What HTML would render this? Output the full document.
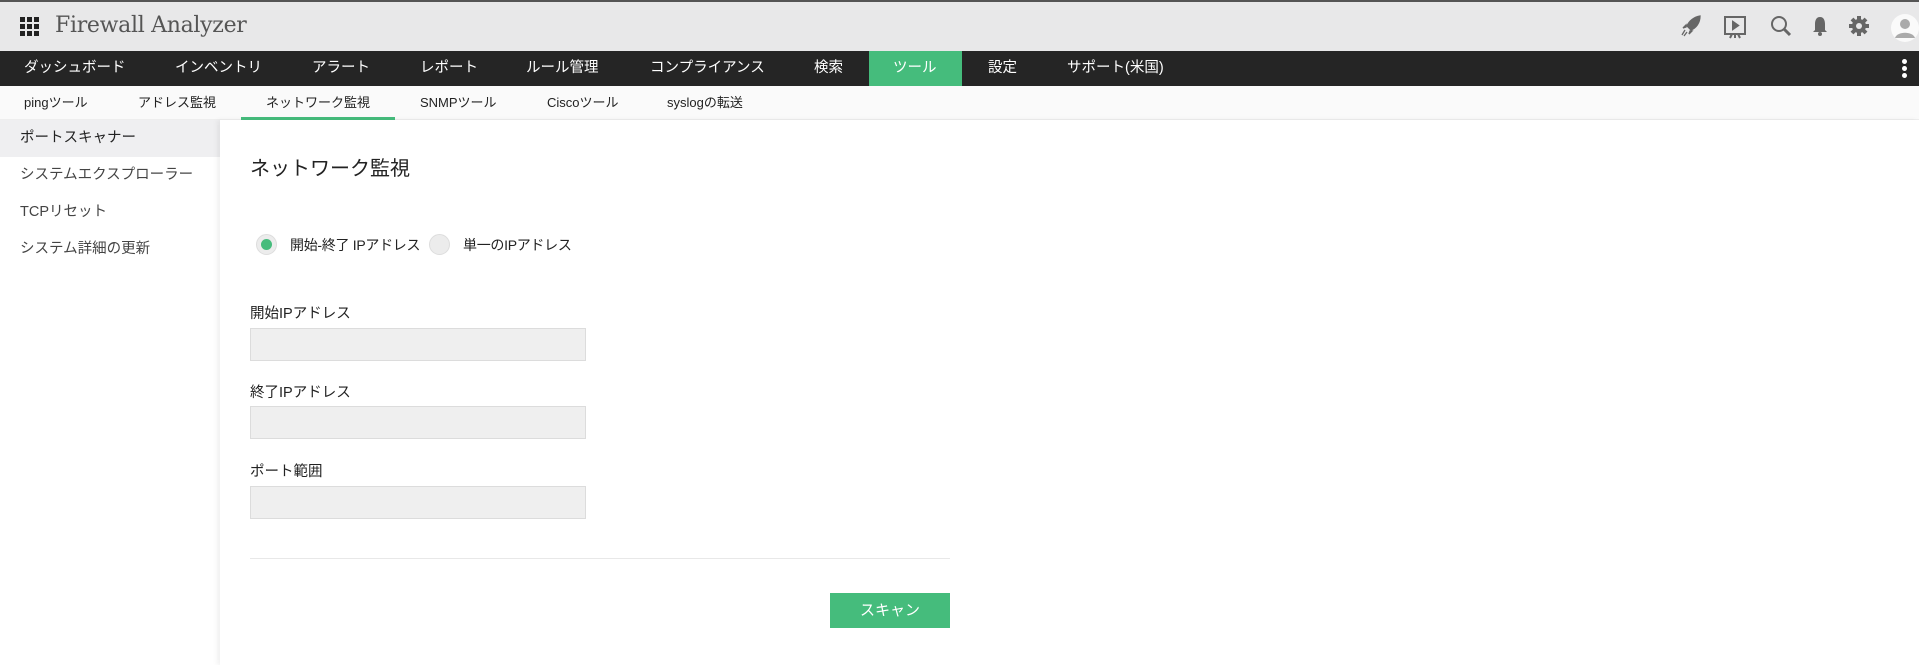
<!DOCTYPE html>
<html><head><meta charset="utf-8"><style>
*{margin:0;padding:0;box-sizing:border-box}
body{width:1919px;height:665px;overflow:hidden;background:#fff;font-family:"Liberation Sans","Noto Sans CJK JP",sans-serif;color:#222;position:relative}
.top{position:absolute;left:0;top:0;width:1919px;height:51px;background:#e8e8e9;border-top:2px solid #555}
.title{position:absolute;left:55px;top:11px;font-family:"DejaVu Serif","Liberation Serif",serif;font-size:22px;color:#555;font-weight:300;letter-spacing:-0.3px}
.nav{position:absolute;left:0;top:51px;width:1919px;height:35px;background:#252525}
.nav span{position:absolute;top:0;line-height:35px;color:#fff;font-size:14.5px}
.sub{position:absolute;left:0;top:86px;width:1919px;height:34px;background:#fafafa;border-bottom:1px solid #eee}
.sub span{position:absolute;top:0;line-height:33px;font-size:13px;color:#222}
.side{position:absolute;left:0;top:120px;width:220px;height:545px;background:#fff}
.side div{height:37px;line-height:37px;padding-left:20px;font-size:14.5px;color:#444}
.main{position:absolute;left:220px;top:120px;width:1699px;height:545px;background:#fff;box-shadow:-3px 0 5px rgba(0,0,0,.06)}
.abs{position:absolute}
.lbl{position:absolute;left:250px;font-size:14.5px;color:#222}
.inp{position:absolute;left:250px;width:336px;height:33px;background:#efefef;border:1px solid #dcdcdc}
</style></head><body>
<div class="top">
<svg class="abs" style="left:20px;top:15px" width="20" height="20" viewBox="0 0 20 20" fill="#222">
<rect x="0" y="0" width="5" height="5"/><rect x="7" y="0" width="5" height="5"/><rect x="14" y="0" width="5" height="5"/>
<rect x="0" y="7" width="5" height="5"/><rect x="7" y="7" width="5" height="5"/><rect x="14" y="7" width="5" height="5"/>
<rect x="0" y="14" width="5" height="5"/><rect x="7" y="14" width="5" height="5"/><rect x="14" y="14" width="5" height="5"/></svg>
<div class="title">Firewall Analyzer</div>
<svg class="abs" style="left:1680px;top:13px" width="22" height="22" viewBox="0 0 22 22" fill="#666"><path d="M20 1 C14 2 9 6 7 11 L11 15 C16 13 20 8 20 1Z M6 12 L3 13 L6 10Z M10 16 L9 19 L12 16Z M5 15 L2 20 M7 17 L4 21" stroke="#666" stroke-width="1.3"/></svg>
<svg class="abs" style="left:1722px;top:12px" width="26" height="26" viewBox="0 0 26 26" fill="none" stroke="#666" stroke-width="2"><rect x="3" y="3" width="20" height="17"/><path d="M11 8 L16 11.5 L11 15Z" fill="#666"/><path d="M13 20 V24 M8 24 L10 20 M18 24 L16 20"/></svg>
<svg class="abs" style="left:1770px;top:13px" width="22" height="22" viewBox="0 0 22 22" fill="none" stroke="#666" stroke-width="2"><circle cx="9" cy="9" r="7"/><path d="M14 14 L20 20" stroke-width="3"/></svg>
<svg class="abs" style="left:1810px;top:13px" width="20" height="22" viewBox="0 0 20 22" fill="#666"><path d="M10 2 C6 2 5 6 5 9 V15 L3 17 H17 L15 15 V9 C15 6 14 2 10 2Z"/><circle cx="10" cy="19" r="2"/></svg>
<svg class="abs" style="left:1848px;top:13px" width="22" height="22" viewBox="0 0 22 22" fill="#666"><circle cx="11" cy="11" r="7"/><g stroke="#666" stroke-width="4"><path d="M11 1V21M1 11H21M4 4L18 18M18 4L4 18"/></g><circle cx="11" cy="11" r="3" fill="#e8e8e9"/></svg>
<svg class="abs" style="left:1890px;top:11px" width="29" height="30" viewBox="0 0 29 30"><circle cx="15" cy="15" r="14" fill="#fafafa"/><circle cx="15" cy="11" r="5" fill="#aaa"/><path d="M5 25 C7 18 23 18 25 25 Z" fill="#aaa"/></svg>
</div>
<div class="nav">
<span style="left:24px">ダッシュボード</span><span style="left:175px">インベントリ</span><span style="left:312px">アラート</span><span style="left:420px">レポート</span><span style="left:526px">ルール管理</span><span style="left:650px">コンプライアンス</span><span style="left:814px">検索</span>
<div class="abs" style="left:869px;top:0;width:93px;height:35px;background:#45bc7c"></div><span style="left:893px">ツール</span>
<span style="left:988px">設定</span><span style="left:1067px">サポート(米国)</span>
<div class="abs" style="left:1902px;top:8px;width:5px;height:5px;border-radius:50%;background:#fff"></div>
<div class="abs" style="left:1902px;top:15px;width:5px;height:5px;border-radius:50%;background:#fff"></div>
<div class="abs" style="left:1902px;top:22px;width:5px;height:5px;border-radius:50%;background:#fff"></div>
</div>
<div class="sub">
<span style="left:24px">pingツール</span><span style="left:138px">アドレス監視</span><span style="left:266px">ネットワーク監視</span><span style="left:420px">SNMPツール</span><span style="left:547px">Ciscoツール</span><span style="left:667px">syslogの転送</span>
<div class="abs" style="left:241px;top:31px;width:154px;height:3px;background:#45bc7c"></div>
</div>
<div class="side">
<div style="background:#efeff1;color:#222">ポートスキャナー</div><div>システムエクスプローラー</div><div>TCPリセット</div><div>システム詳細の更新</div>
</div>
<div class="main"></div>
<div class="abs" style="left:250px;top:152px;font-size:20px;color:#222">ネットワーク監視</div>
<div class="abs" style="left:256px;top:234px;width:21px;height:21px;border-radius:50%;background:#ececec;border:1px solid #ddd"></div>
<div class="abs" style="left:261px;top:239px;width:11px;height:11px;border-radius:50%;background:#45bc7c"></div>
<div class="abs" style="left:290px;top:235px;font-size:14px;letter-spacing:-0.3px">開始-終了 IPアドレス</div>
<div class="abs" style="left:429px;top:234px;width:21px;height:21px;border-radius:50%;background:#ececec;border:1px solid #ddd"></div>
<div class="abs" style="left:463px;top:235px;font-size:14px;letter-spacing:-0.3px">単一のIPアドレス</div>
<div class="lbl" style="top:302px">開始IPアドレス</div><div class="inp" style="top:328px"></div>
<div class="lbl" style="top:381px">終了IPアドレス</div><div class="inp" style="top:406px"></div>
<div class="lbl" style="top:460px">ポート範囲</div><div class="inp" style="top:486px"></div>
<div class="abs" style="left:250px;top:558px;width:700px;height:1px;background:#e8e8e8"></div>
<div class="abs" style="left:830px;top:593px;width:120px;height:35px;background:#45bc7c;color:#fff;font-size:15px;text-align:center;line-height:35px">スキャン</div>
</body></html>
